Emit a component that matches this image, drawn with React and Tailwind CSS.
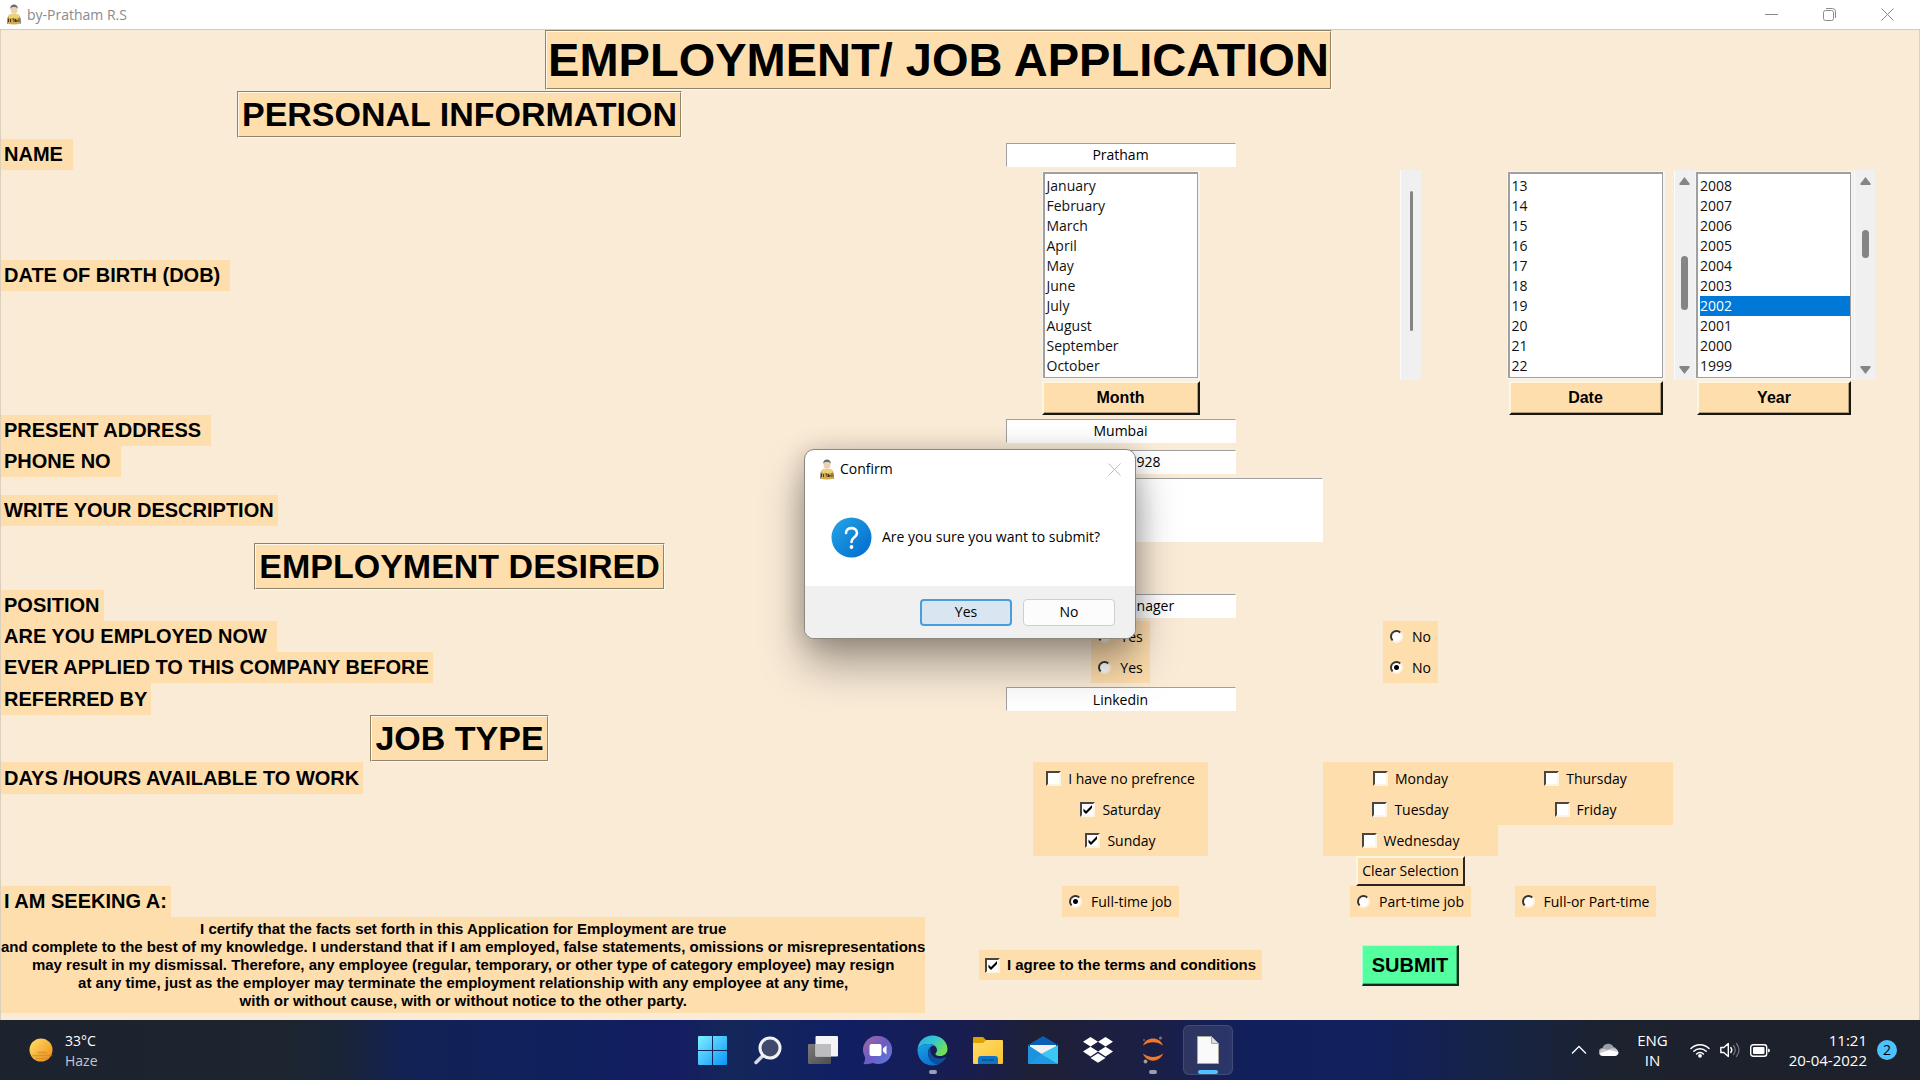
import React from "react";

const MONTHS = ["January", "February", "March", "April", "May", "June", "July", "August", "September", "October"];
const DATES = ["13", "14", "15", "16", "17", "18", "19", "20", "21", "22"];
const YEARS = ["2008", "2007", "2006", "2005", "2004", "2003", "2002", "2001", "2000", "1999"];

function Avatar() {
  return (
    <svg width="16" height="21" viewBox="0 0 16 21" aria-hidden="true">
      <path d="M1 19.5c0-6 1-8.500 4-9.500h6c3 1 4 3.500 4 9.500q-7 2-14 0z" fill="#d2ab50" />
      <path d="M2.500 12c1-1.500 2-2 3-2h5c1 0 2 .5 3 2l-1 2h-9z" fill="#ecd07a" />
      <ellipse cx="8" cy="5.500" rx="3.400" ry="4.600" fill="#ecd0b4" />
      <path d="M4.300 5C4 2 5.500.5 8 .5S12 2 11.700 5c-.6-1.500-1.500-2-3.700-2s-3.100.5-3.700 2z" fill="#6b6d70" />
      <path d="M2.500 14.500v3.500M4.500 15v3M6.500 15h1.500v3M9.500 15v3l1.500-2v2M13 14.500v3.500" stroke="#4a3912" fill="none" />
      <path d="M1 19.500c0-3 .3-5 1-6.500v7z" fill="#8b8f96" />
      <path d="M15 19.500c0-3-.3-5-1-6.500v7z" fill="#8b8f96" />
    </svg>
  );
}

function SectionBox({ children, large }) {
  return (
    <div className="border border-t-[#8f8468] border-l-[#8f8468] border-r-[#fffaf0] border-b-[#fffaf0]">
      <div className="border border-t-[#fff8ea] border-l-[#fff8ea] border-r-[#8f8468] border-b-[#8f8468] bg-[#ffdead]">
        {large ? (
          <h1 className="text-[47px] leading-[56px] font-bold px-px whitespace-nowrap">{children}</h1>
        ) : (
          <h2 className="text-[34px] leading-[43px] font-bold px-[3px] whitespace-nowrap">{children}</h2>
        )}
      </div>
    </div>
  );
}

function RowLabel({ children, htmlFor, roomy, tall, top }) {
  const Tag = htmlFor ? "label" : "div";
  return (
    <Tag
      htmlFor={htmlFor}
      className={
        "col-start-1 justify-self-start bg-[#ffdead] pl-[3px] text-xl font-bold whitespace-nowrap " +
        (roomy ? "pr-[10px] " : "pr-1 ") +
        (tall ? "leading-8 " : "leading-[31px] ") +
        (top ? "self-start" : "self-center")
      }
    >
      {children}
    </Tag>
  );
}

const ENTRY =
  "col-start-2 justify-self-center self-center w-[230px] h-6 bg-white text-center text-sm border border-t-[#a0a0a0] border-l-[#a0a0a0] border-r-white border-b-white outline-none font-['Open_Sans',sans-serif]";

function Choice({ type, name, label, checked, bold }) {
  return (
    <label
      className={
        "flex items-center justify-center whitespace-nowrap text-black " +
        (type === "radio" ? "gap-[9px] " : "gap-[7px] ") +
        (bold ? "text-[15px] font-bold" : "text-sm font-['Open_Sans',sans-serif]")
      }
    >
      {type === "radio" ? (
        <input
          type="radio"
          name={name}
          defaultChecked={checked}
          className="appearance-none size-[13px] rounded-full border-2 border-t-[#333] border-l-[#333] border-r-[#fff4e2] border-b-[#fff4e2] bg-white checked:bg-[radial-gradient(circle,#000_2px,#fff_3px)]"
        />
      ) : (
        <span className="relative flex">
          <input
            type="checkbox"
            name={name}
            defaultChecked={checked}
            className="peer appearance-none size-[15px] border-2 border-t-[#4a4540] border-l-[#4a4540] border-r-[#fff4e2] border-b-[#fff4e2] bg-white"
          />
          <svg className="absolute inset-0 hidden peer-checked:block pointer-events-none" width="15" height="15" viewBox="0 0 15 15">
            <path d="M3.500 6.500v3L6 12l6-6V3L6 9z" fill="#000" />
          </svg>
        </span>
      )}
      <span>{label}</span>
    </label>
  );
}

function ListBox({ label, items, value }) {
  return (
    <div className="w-[158px] border-t border-r-2 border-b-2 border-l border-[#f7f4f0]">
      <select
        size={10}
        defaultValue={value}
        aria-label={label}
        className="block w-full appearance-none overflow-hidden rounded-none bg-white border-t-2 border-l-2 border-r border-b border-[#a0a0a0] pl-[2px] pt-[2px] pb-px text-sm text-[#111] outline-none [scrollbar-width:none] font-['Open_Sans',sans-serif]"
      >
        {items.map((item) => (
          <option
            key={item}
            value={item}
            className="block h-5 min-h-5 leading-5 p-0 checked:bg-[linear-gradient(#0078d7,#0078d7)] checked:text-white"
          >
            {item}
          </option>
        ))}
      </select>
    </div>
  );
}

function ScrollBar({ thumb }) {
  return (
    <div className="flex w-[21px] flex-col items-center self-stretch justify-self-center border-l border-[#fbfbfb] bg-[#f0f0f0] pt-[7px] pb-[6px]">
      <svg width="11" height="8" viewBox="0 0 11 8" aria-hidden="true">
        <path d="M5.500 0 10.500 6.500V8H.5V6.500z" fill="#858585" />
      </svg>
      <div className="flex-1">
        <div className={"w-[7px] rounded-full bg-[#858585] " + thumb} />
      </div>
      <svg width="11" height="8" viewBox="0 0 11 8" aria-hidden="true">
        <path d="M5.500 8 10.500 1.500V0H.5V1.500z" fill="#858585" />
      </svg>
    </div>
  );
}

function PickButton({ children }) {
  return (
    <button
      type="button"
      className="h-[34px] w-full border-2 border-t-[#fff5e3] border-l-[#fff5e3] border-r-[#1a1612] border-b-[#1a1612] bg-[#ffdead] text-base leading-none font-bold shadow-[inset_-1px_-1px_0_#b59d7a]"
    >
      {children}
    </button>
  );
}

function TaskIcon({ label, active, running, children }) {
  return (
    <button
      type="button"
      aria-label={label}
      className={
        "relative flex size-[50px] items-center justify-center rounded-md " +
        (active ? "bg-white/10 border border-white/10" : "")
      }
    >
      {children}
      {running && <span className="absolute bottom-px h-1 w-2 rounded-full bg-[#9a9fb8]" />}
      {active && <span className="absolute bottom-0 h-1 w-5 rounded-full bg-[#4cc2ff]" />}
    </button>
  );
}

function Taskbar() {
  return (
    <footer className="grid h-[60px] grid-cols-[1fr_auto_1fr] items-center bg-[linear-gradient(90deg,#1c222e_0%,#1c2530_15%,#1a2439_18%,#122255_21%,#10205e_30%,#141c62_35%,#14275a_38%,#101f63_44%,#181d50_50%,#1e2036_54%,#1b1f46_60%,#11205c_65%,#12205c_72%,#172340_79%,#1c222e_84%,#1c212b_100%)] font-['Open_Sans',sans-serif] text-[15px] leading-5 text-white">
      <div className="flex items-center gap-3 pl-[29px]">
        <svg width="24" height="24" viewBox="0 0 24 24" aria-hidden="true">
          <defs>
            <linearGradient id="sun" x1="0" y1="0" x2="1" y2="1">
              <stop offset="0" stopColor="#ffe26a" />
              <stop offset="1" stopColor="#f08a12" />
            </linearGradient>
          </defs>
          <circle cx="12" cy="12" r="11.500" fill="url(#sun)" />
          <path d="M9 14.500h8M4 17.500h19M7 20.500h11" stroke="#c07f2e" strokeWidth="1.500" opacity=".5" strokeLinecap="round" />
        </svg>
        <div className="pt-px text-sm leading-5">
          <div>33°C</div>
          <div className="text-[#c3c7ce]">Haze</div>
        </div>
      </div>

      <nav className="flex gap-[5px]">
        <TaskIcon label="Start">
          <svg width="29" height="29" viewBox="0 0 29 29">
            <defs>
              <linearGradient id="win" x1="0" y1="0" x2="1" y2="1">
                <stop offset="0" stopColor="#7df1ff" />
                <stop offset="1" stopColor="#0a94f8" />
              </linearGradient>
            </defs>
            <path d="M1 0h13v14H0V1q0-1 1-1zM15 0h13q1 0 1 1v13H15zM0 15h14v14H1q-1 0-1-1zM15 15h14v13q0 1-1 1H15z" fill="url(#win)" />
          </svg>
        </TaskIcon>
        <TaskIcon label="Search">
          <svg width="28" height="29" viewBox="0 0 28 29">
            <path d="M2 26.500 9.500 19" stroke="#d6dae0" strokeWidth="3.500" strokeLinecap="round" />
            <circle cx="16" cy="12" r="10" fill="#414a6c" stroke="#f0f2f4" strokeWidth="3" />
          </svg>
        </TaskIcon>
        <TaskIcon label="Task view">
          <svg width="30" height="29" viewBox="0 0 30 29">
            <defs>
              <linearGradient id="tv" x1="0" y1="0" x2="1" y2="1">
                <stop offset="0" stopColor="#7a7a7a" />
                <stop offset="1" stopColor="#4e4e4e" />
              </linearGradient>
            </defs>
            <rect x="0" y="8" width="23" height="20" rx="1" fill="url(#tv)" />
            <rect x="7.500" y="0" width="22.500" height="20.500" rx="1" fill="#f4f4f6" />
            <path d="M7.500 8H23v12.500H7.500z" fill="#bdbdbf" />
          </svg>
        </TaskIcon>
        <TaskIcon label="Chat">
          <svg width="29" height="29" viewBox="0 0 29 29">
            <defs>
              <linearGradient id="chat" x1="0" y1="0" x2="1" y2="1">
                <stop offset="0" stopColor="#a6689e" />
                <stop offset=".5" stopColor="#6a5cc4" />
                <stop offset="1" stopColor="#5d7de0" />
              </linearGradient>
            </defs>
            <path d="M15 0a14 14 0 1 1-5 27q-4 1.500-9.500 1Q2.500 25 2 21A14 14 0 0 1 15 0z" fill="url(#chat)" />
            <rect x="6.500" y="8" width="12" height="12" rx="2" fill="#fff" />
            <path d="M20 12.500 23.500 9.500v9L20 15.500z" fill="#fff" />
          </svg>
        </TaskIcon>
        <TaskIcon label="Edge" running>
          <svg width="31" height="31" viewBox="0 0 31 31">
            <defs>
              <linearGradient id="ed1" x1="0" y1="0" x2="1" y2=".5">
                <stop offset="0" stopColor="#2fa8ea" />
                <stop offset=".55" stopColor="#34c8cf" />
                <stop offset="1" stopColor="#72e054" />
              </linearGradient>
              <linearGradient id="ed2" x1="0" y1="0" x2=".6" y2="1">
                <stop offset="0" stopColor="#1aa5e4" />
                <stop offset="1" stopColor="#0a6fd0" />
              </linearGradient>
            </defs>
            <path d="M.5 14.500C1.500 5.500 8 .5 15.500.5 24.500.5 30.500 7 30.500 14c0 4.500-3.500 7-7.500 7-3.500 0-4.500-1.200-4.500-2 0-1 1.500-1.500 1.500-4 0-3-3-6-8-6C6.500 9 2 11 .5 14.500z" fill="url(#ed1)" />
            <path d="M.5 14.500C2 11 6.500 9 12 9c2 0 4 .6 5.300 1.500C13.500 11 11 14 11 18c0 6 4.500 11 11 11-7 3.500-21.500 1-21.500-14.500z" fill="url(#ed2)" />
            <path d="M13.500 12.500C11.500 14 11 16 11 18c0 6 4.500 11.500 11 11 3-1.300 5.500-3.500 6.800-6.200.3-.6-.2-.9-.7-.6C20 26 12 21 13.500 12.500z" fill="#0f4f9c" />
          </svg>
        </TaskIcon>
        <TaskIcon label="File Explorer">
          <svg width="30" height="27" viewBox="0 0 30 27">
            <defs>
              <linearGradient id="fold" x1="0" y1="0" x2="1" y2="1">
                <stop offset="0" stopColor="#ffdd6b" />
                <stop offset="1" stopColor="#fcc22e" />
              </linearGradient>
            </defs>
            <path d="M0 1q0-1 1-1h9l3 3-2 4H0z" fill="#dfa000" />
            <path d="M0 6h10l3-3h16q1 0 1 1v22q0 1-1 1H1q-1 0-1-1z" fill="url(#fold)" />
            <path d="M5 27v-5q0-3 3-3h14q3 0 3 3v5z" fill="#0f74c8" />
            <path d="M9 23h12" stroke="#0a4f91" strokeWidth="1.500" />
          </svg>
        </TaskIcon>
        <TaskIcon label="Mail">
          <svg width="30" height="28" viewBox="0 0 30 28">
            <path d="M15 0 30 9H0z" fill="#0a5fb2" />
            <path d="M2 9h26v8L15 22 2 17z" fill="#f1f1f1" />
            <path d="M0 9v18q0 1 1 1h28z" fill="#1d93e0" />
            <path d="M30 9v18q0 1-1 1L13 18z" fill="#3cc6f5" />
            <path d="M13 18 29 28H1z" fill="#1f9ae4" />
          </svg>
        </TaskIcon>
        <TaskIcon label="Dropbox">
          <svg width="30" height="26" viewBox="0 0 30 26">
            <path d="M7.500 0 15 4.800 7.500 9.600 0 4.800zM22.500 0 30 4.800 22.500 9.600 15 4.800zM7.500 9.800 15 14.600 7.500 19.400 0 14.600zM22.500 9.800 30 14.600 22.500 19.400 15 14.600zM15 16.200 22.500 21 15 25.800 7.500 21z" fill="#fff" />
          </svg>
        </TaskIcon>
        <TaskIcon label="Jupyter" running>
          <svg width="22" height="28" viewBox="0 0 22 28">
            <path d="M1 9.500C4 0 18 0 21 9.500 15 5 7 5 1 9.500zM1 17.500C4 27 18 27 21 17.500 15 22 7 22 1 17.500z" fill="#f37726" />
            <circle cx="18.500" cy="2" r="1.600" fill="#757679" />
            <circle cx="2" cy="4" r="1" fill="#66676c" />
            <circle cx="3.500" cy="25.500" r="1.900" fill="#9e9e9e" />
          </svg>
        </TaskIcon>
        <TaskIcon label="Python" active>
          <svg width="22" height="28" viewBox="0 0 22 28">
            <path d="M.5.5h14l7 7v20H.5z" fill="#fafafa" stroke="#a9a89c" />
            <path d="M14.500.5v7h7z" fill="#dcdcdc" stroke="#a9a89c" />
          </svg>
        </TaskIcon>
      </nav>

      <div className="flex items-center justify-end pr-[23px]">
        <svg width="16" height="10" viewBox="0 0 16 10" className="mr-3" aria-hidden="true">
          <path d="M1 8.500 8 1.500l7 7" stroke="#fff" strokeWidth="1.300" fill="none" />
        </svg>
        <svg width="20" height="14" viewBox="0 0 20 14" className="mr-[18px]" aria-hidden="true">
          <path d="M4 13a4 4 0 0 1-.5-8A6 6 0 0 1 14.500 4 5 5 0 0 1 16 13z" fill="#9b9ea4" />
          <path d="M4 13a4 4 0 0 1-2-6.500Q5 5 8 7l4-1.500q4-1 6.500 1.500A4 4 0 0 1 16 13z" fill="#c9cbcf" />
          <path d="M4 13q-2.500-.5-3.500-2.500L10 7l9.500 2q0 3.500-3.500 4z" fill="#fff" />
        </svg>
        <div className="mr-[22px] text-center">
          <div>ENG</div>
          <div>IN</div>
        </div>
        <svg width="20" height="15" viewBox="0 0 20 15" className="mr-[10px]" aria-hidden="true">
          <path d="M1 5.500a12.700 12.700 0 0 1 18 0M3.800 8.300a8.800 8.800 0 0 1 12.400 0M6.600 11a4.800 4.800 0 0 1 6.800 0" stroke="#fff" strokeWidth="1.500" fill="none" strokeLinecap="round" />
          <circle cx="10" cy="12.800" r="1.900" fill="#fff" />
        </svg>
        <svg width="20" height="16" viewBox="0 0 20 16" className="mr-[10px]" aria-hidden="true">
          <path d="M.8 5.500h3L8.300 1.500v13L3.800 10.500h-3z" stroke="#fff" strokeWidth="1.400" fill="none" strokeLinejoin="round" />
          <path d="M10.800 5.500q2 2.500 0 5" stroke="#fff" strokeWidth="1.400" fill="none" strokeLinecap="round" />
          <path d="M13.500 3.500q3.500 4.500 0 9M16.500 1.500q5 6.500 0 13" stroke="#6d7179" strokeWidth="1.300" fill="none" strokeLinecap="round" />
        </svg>
        <svg width="20" height="13" viewBox="0 0 20 13" className="mr-[19px]" aria-hidden="true">
          <rect x=".7" y=".7" width="16" height="11.600" rx="2.500" stroke="#fff" strokeWidth="1.400" fill="none" />
          <rect x="3" y="3" width="11.500" height="7" rx="1" fill="#fff" />
          <path d="M18 4.500q2 .5 2 2t-2 2z" fill="#fff" />
        </svg>
        <div className="mr-[10px] text-right">
          <div>11:21</div>
          <div>20-04-2022</div>
        </div>
        <span className="flex size-5 items-center justify-center rounded-full bg-[#4cc2ff] text-sm text-black">2</span>
      </div>
    </footer>
  );
}

function ConfirmDialog() {
  return (
    <div
      role="dialog"
      aria-label="Confirm"
      className="absolute left-[804px] top-[449px] flex w-[332px] flex-col overflow-hidden rounded-[10px] border border-[#8d8780] bg-white text-sm text-black shadow-[0_26px_44px_rgba(0,0,0,0.34),0_2px_26px_rgba(0,0,0,0.2)] font-['Open_Sans',sans-serif]"
    >
      <div className="flex h-[38px] items-center gap-[5px] pl-[14px] pr-[14px]">
        <Avatar />
        <span className="flex-1">Confirm</span>
        <button type="button" aria-label="Close">
          <svg width="13" height="13" viewBox="0 0 13 13">
            <path d="M.5.5l12 12M12.500.5l-12 12" stroke="#bdbdbd" />
          </svg>
        </button>
      </div>
      <div className="flex h-[98px] items-center gap-[10px] pl-[26px]">
        <svg width="41" height="41" viewBox="0 0 41 41" aria-hidden="true">
          <defs>
            <linearGradient id="q" x1="0" y1="0" x2="1" y2="1">
              <stop offset="0" stopColor="#25a6e6" />
              <stop offset="1" stopColor="#0069ce" />
            </linearGradient>
          </defs>
          <circle cx="20.500" cy="20.500" r="20" fill="url(#q)" />
          <path d="M15 16c0-6.500 11-6.500 11 0 0 4.500-5.500 4-5.500 9" stroke="#fff" strokeWidth="2.600" fill="none" strokeLinecap="round" />
          <circle cx="20.500" cy="30" r="1.900" fill="#fff" />
        </svg>
        <span>Are you sure you want to submit?</span>
      </div>
      <div className="flex h-[52px] items-center justify-end gap-[11px] bg-[#f0f0f0] pr-5">
        <button type="button" className="h-[27px] w-[92px] rounded border-2 border-[#4a9ddd] bg-[#d9e6f1]">
          Yes
        </button>
        <button type="button" className="h-[27px] w-[92px] rounded border border-[#cfcfcf] bg-[#fcfcfc]">
          No
        </button>
      </div>
    </div>
  );
}

export default function App() {
  return (
    <div className="relative flex min-h-screen flex-col bg-[#faebd7] text-black font-['Liberation_Sans',Arial,sans-serif]">
      <header className="flex h-[30px] items-center border-b border-[#d9cbb5] bg-white pl-[6px] pr-[26px]">
        <Avatar />
        <span className="flex-1 pl-[5px] text-sm text-[#8a8a8a] font-['Open_Sans',sans-serif]">by-Pratham R.S</span>
        <div className="flex items-center gap-[45px]">
          <button type="button" aria-label="Minimize">
            <svg width="13" height="13" viewBox="0 0 13 13">
              <path d="M0 6.500h13" stroke="#8a8a8a" />
            </svg>
          </button>
          <button type="button" aria-label="Restore">
            <svg width="13" height="13" viewBox="0 0 13 13">
              <rect x=".5" y="2.500" width="10" height="10" rx="2" fill="none" stroke="#8a8a8a" />
              <path d="M3 .5h6.500q3 0 3 3V10" fill="none" stroke="#8a8a8a" />
            </svg>
          </button>
          <button type="button" aria-label="Close">
            <svg width="13" height="13" viewBox="0 0 13 13">
              <path d="M.5.5l12 12M12.500.5l-12 12" stroke="#8a8a8a" />
            </svg>
          </button>
        </div>
      </header>

      <form className="grid flex-1 content-start border-x border-[#dccfbb] grid-cols-[minmax(0,917fr)_minmax(0,405fr)_minmax(0,175fr)_minmax(0,175fr)_minmax(0,22fr)_minmax(0,158fr)_minmax(0,23fr)_minmax(0,43fr)]">
        <div className="col-span-7 row-start-1 justify-self-center">
          <SectionBox large>EMPLOYMENT/ JOB APPLICATION</SectionBox>
        </div>

        <div className="col-start-1 row-start-2 justify-self-center py-px">
          <SectionBox>PERSONAL INFORMATION</SectionBox>
        </div>

        <RowLabel htmlFor="name" roomy>NAME</RowLabel>
        <input id="name" className={ENTRY} defaultValue="Pratham" />

        <div className="col-start-1 row-start-4 self-center flex">
          <RowLabel roomy>DATE OF BIRTH (DOB)</RowLabel>
        </div>
        <div className="col-start-2 row-start-4 flex h-[210px] items-center justify-center">
          <ListBox label="Month" items={MONTHS} />
        </div>
        <div className="col-start-3 row-start-4 flex w-[21px] justify-center justify-self-center border-l border-[#fbfbfb] bg-[#f0f0f0] pt-[21px]">
          <div className="h-[140px] w-[3px] rounded-full bg-[#858585]" />
        </div>
        <div className="col-start-4 row-start-4 flex items-center justify-center">
          <ListBox label="Date" items={DATES} />
        </div>
        <div className="col-start-5 row-start-4 flex justify-center">
          <ScrollBar thumb="mt-[71px] h-[54px]" />
        </div>
        <div className="col-start-6 row-start-4 flex items-center justify-center">
          <ListBox label="Year" items={YEARS} value="2002" />
        </div>
        <div className="col-start-7 row-start-4 flex justify-center">
          <ScrollBar thumb="mt-[45px] h-7" />
        </div>

        <div className="col-start-1 row-start-5" />
        <div className="col-start-2 row-start-5 w-[158px] justify-self-center pt-px">
          <PickButton>Month</PickButton>
        </div>
        <div className="col-start-4 row-start-5 w-[154px] justify-self-center pt-px">
          <PickButton>Date</PickButton>
        </div>
        <div className="col-start-6 row-start-5 w-[154px] justify-self-center pt-px">
          <PickButton>Year</PickButton>
        </div>

        <RowLabel htmlFor="address" roomy>PRESENT ADDRESS</RowLabel>
        <input id="address" className={ENTRY} defaultValue="Mumbai" />

        <RowLabel htmlFor="phone" roomy>PHONE NO</RowLabel>
        <input id="phone" className={ENTRY} defaultValue="9876547928" />

        <RowLabel htmlFor="description">WRITE YOUR DESCRIPTION</RowLabel>
        <textarea
          id="description"
          className="col-start-2 my-px h-16 w-full resize-none border border-t-[#a0a0a0] border-l-[#a0a0a0] border-r-white border-b-white bg-white text-sm outline-none"
        />

        <div className="col-start-1 justify-self-center">
          <SectionBox>EMPLOYMENT DESIRED</SectionBox>
        </div>

        <RowLabel htmlFor="position">POSITION</RowLabel>
        <input id="position" className={ENTRY} defaultValue="Project Manager" />

        <RowLabel roomy>ARE YOU EMPLOYED NOW</RowLabel>
        <div className="col-start-2 flex justify-self-center bg-[#ffdead] px-[7px]">
          <Choice type="radio" name="employed" label="Yes" checked />
        </div>
        <div className="col-start-3 flex justify-self-center bg-[#ffdead] px-[7px]">
          <Choice type="radio" name="employed" label="No" />
        </div>

        <RowLabel>EVER APPLIED TO THIS COMPANY BEFORE</RowLabel>
        <div className="col-start-2 flex justify-self-center bg-[#ffdead] px-[7px]">
          <Choice type="radio" name="applied" label="Yes" />
        </div>
        <div className="col-start-3 flex justify-self-center bg-[#ffdead] px-[7px]">
          <Choice type="radio" name="applied" label="No" checked />
        </div>

        <RowLabel htmlFor="referred" tall>REFERRED BY</RowLabel>
        <input id="referred" className={ENTRY} defaultValue="Linkedin" />

        <div className="col-start-1 justify-self-center">
          <SectionBox>JOB TYPE</SectionBox>
        </div>

        <RowLabel tall top>DAYS /HOURS AVAILABLE TO WORK</RowLabel>
        <div className="col-start-2 grid w-[175px] auto-rows-[31px] justify-self-center self-start bg-[#ffdead] pt-px">
          <Choice type="checkbox" name="days" label="I have no prefrence" />
          <Choice type="checkbox" name="days" label="Saturday" checked />
          <Choice type="checkbox" name="days" label="Sunday" checked />
        </div>
        <div className="col-start-3 flex flex-col items-center">
          <div className="grid w-full auto-rows-[31px] bg-[#ffdead] pt-px">
            <Choice type="checkbox" name="days" label="Monday" />
            <Choice type="checkbox" name="days" label="Tuesday" />
            <Choice type="checkbox" name="days" label="Wednesday" />
          </div>
          <button
            type="button"
            className="h-[30px] border-2 border-t-[#fff5e3] border-l-[#fff5e3] border-r-[#2a2520] border-b-[#2a2520] bg-[#ffdead] px-1 text-sm whitespace-nowrap font-['Open_Sans',sans-serif]"
          >
            Clear Selection
          </button>
        </div>
        <div className="col-start-4 grid auto-rows-[31px] self-start bg-[#ffdead] pt-px">
          <Choice type="checkbox" name="days" label="Thursday" />
          <Choice type="checkbox" name="days" label="Friday" />
        </div>

        <RowLabel>I AM SEEKING A:</RowLabel>
        <div className="col-start-2 flex justify-self-center bg-[#ffdead] px-[7px]">
          <Choice type="radio" name="seeking" label="Full-time job" checked />
        </div>
        <div className="col-start-3 flex justify-self-center bg-[#ffdead] px-[7px]">
          <Choice type="radio" name="seeking" label="Part-time job" />
        </div>
        <div className="col-start-4 flex justify-self-center bg-[#ffdead] px-[7px]">
          <Choice type="radio" name="seeking" label="Full-or Part-time" />
        </div>

        <p className="col-start-1 w-max bg-[#ffdead] py-[3px] text-center text-[15px] leading-[18px] font-bold whitespace-nowrap">
          I certify that the facts set forth in this Application for Employment are true
          <br />
          and complete to the best of my knowledge. I understand that if I am employed, false statements, omissions or misrepresentations
          <br />
          may result in my dismissal. Therefore, any employee (regular, temporary, or other type of category employee) may resign
          <br />
          at any time, just as the employer may terminate the employment relationship with any employee at any time,
          <br />
          with or without cause, with or without notice to the other party.
        </p>
        <div className="col-start-2 flex h-[30px] justify-self-center self-center bg-[#ffdead] px-[6px]">
          <Choice type="checkbox" name="agree" label="I agree to the terms and conditions" checked bold />
        </div>
        <button
          type="submit"
          className="col-start-3 h-[41px] w-[97px] justify-self-center self-center border-t border-l border-r-2 border-b-2 border-t-[#a8ffd0] border-l-[#a8ffd0] border-r-[#12291d] border-b-[#12291d] bg-[#54ff9f] text-xl leading-none font-bold shadow-[inset_-1px_-1px_0_#3bb36f]"
        >
          SUBMIT
        </button>
      </form>

      <Taskbar />
      <ConfirmDialog />
    </div>
  );
}
